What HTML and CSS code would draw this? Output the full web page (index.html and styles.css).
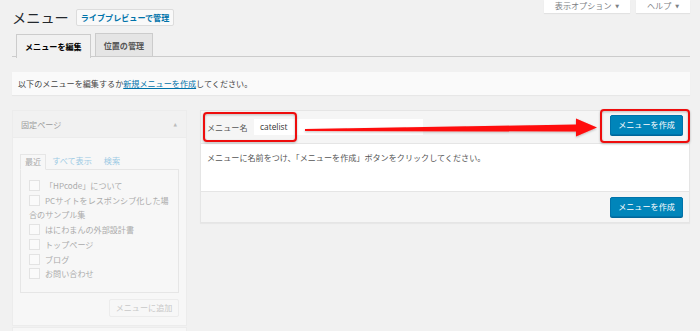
FILE: index.html
```html
<!DOCTYPE html>
<html lang="ja">
<head>
    <meta charset="UTF-8">
    <title>メニュー</title>
    <link rel="stylesheet" href="styles.css">
</head>
<body>

<div class="wrap">
    <div class="screen-meta">
        <span class="meta-btn">表示オプション <span class="caret">▼</span></span>
        <span class="meta-btn help">ヘルプ <span class="caret">▼</span></span>
    </div>

    <div class="title-row">
        <h1>メニュー</h1>
        <a class="title-action">ライブプレビューで管理</a>
    </div>

    <nav class="nav-tabs">
        <a class="tab active">メニューを編集</a>
        <a class="tab">位置の管理</a>
    </nav>

    <div class="notice">以下のメニューを編集するか<a>新規メニューを作成</a>してください。</div>

    <div class="columns">
        <aside class="sidebar">
            <div class="box">
                <div class="box-head">
                    <span>固定ページ</span>
                    <span class="toggle">▲</span>
                </div>
                <div class="box-body">
                    <div class="inner-tabs">
                        <span class="itab active">最近</span>
                        <span class="itab">すべて表示</span>
                        <span class="itab">検索</span>
                    </div>
                    <ul class="page-list">
                        <li><span class="check"></span>「HPcode」について</li>
                        <li><span class="check"></span>PCサイトをレスポンシブ化した場合のサンプル集</li>
                        <li><span class="check"></span>はにわまんの外部設計書</li>
                        <li><span class="check"></span>トップページ</li>
                        <li><span class="check"></span>ブログ</li>
                        <li><span class="check"></span>お問い合わせ</li>
                    </ul>
                    <div class="add-row">
                        <span class="add-btn">メニューに追加</span>
                    </div>
                </div>
            </div>
            <div class="box next"></div>
        </aside>

        <section class="menu-panel">
            <div class="panel-head">
                <label class="name-label">メニュー名</label>
                <span class="name-input">catelist</span>
                <span class="primary-btn">メニューを作成</span>
            </div>
            <div class="panel-body">
                <p>メニューに名前をつけ、「メニューを作成」ボタンをクリックしてください。</p>
            </div>
            <div class="panel-foot">
                <span class="primary-btn">メニューを作成</span>
            </div>
        </section>
    </div>
</div>

<!-- red annotations drawn over the screenshot -->
<svg class="annotations" width="700" height="331" viewBox="0 0 700 331">
    <defs>
        <filter id="soft" x="-10%" y="-50%" width="120%" height="200%">
            <feDropShadow dx="0" dy="1" stdDeviation="1" flood-color="#000" flood-opacity="0.25"/>
        </filter>
    </defs>
    <g filter="url(#soft)" fill="none" stroke="#ee1111" stroke-width="2">
        <rect x="204" y="113" width="92" height="28" rx="3"/>
        <rect x="601" y="110" width="88" height="32" rx="3"/>
    </g>
    <polygon filter="url(#soft)" fill="#ff0a0a"
             points="305,129 576,124.5 576,118.5 597,127.5 576,136.5 576,131.5 305,131"/>
</svg>

</body>
</html>
```

FILE: styles.css
```css
html {
    overflow: hidden;
}

body {
    margin: 0;
    background-color: #f1f1f1;
    font-family: "Noto Sans CJK JP", "Liberation Sans", sans-serif;
    font-size: 8.1px;
    color: #444;
    width: 700px;
    height: 331px;
    overflow: hidden;
    position: relative;
}

a {
    text-decoration: none;
}

.wrap {
    padding: 0 10px 0 12px;
}

/* top right buttons */
.screen-meta {
    float: right;
    display: flex;
    gap: 6px;
}

.meta-btn {
    background-color: #fff;
    color: #7c8084;
    height: 13px;
    line-height: 12px;
    width: 86px;
    text-align: center;
    box-shadow: 0 1px 1px rgba(0, 0, 0, 0.06);
}

.meta-btn.help {
    width: 54px;
}

.caret {
    font-family: "DejaVu Sans", sans-serif;
    font-size: 5px;
    vertical-align: 1px;
    margin-left: 2px;
}

/* title */
.title-row {
    display: flex;
    align-items: center;
    padding-top: 9px;
    height: 17px;
}

h1 {
    margin: 0;
    font-size: 14.2px;
    font-weight: 400;
    color: #23282d;
    line-height: 17px;
}

.title-action {
    margin-left: 7px;
    height: 15px;
    line-height: 15px;
    padding: 0 4px;
    border: 1px solid #dcdcdc;
    background-color: #f9f9f9;
    color: #0073aa;
    font-weight: 700;
    border-radius: 2px;
}

/* tabs */
.nav-tabs {
    margin-top: 7px;
    padding-left: 4px;
    border-bottom: 1px solid #ccc;
    display: flex;
    gap: 4px;
    height: 23px;
}

.tab {
    display: block;
    height: 23px;
    line-height: 23px;
    padding: 0 8px;
    border: 1px solid #ccc;
    border-bottom: none;
    background-color: #e5e5e5;
    color: #555;
    font-weight: 700;
    box-sizing: border-box;
}

.tab.active {
    background-color: #f1f1f1;
    color: #000;
    height: 24px;
    margin-top: 1px;
}

/* notice */
.notice {
    margin-top: 15px;
    height: 23px;
    line-height: 23px;
    padding-left: 6px;
    background-color: #fafafa;
    box-shadow: 0 1px 1px rgba(0, 0, 0, 0.04);
}

.notice a {
    color: #0073aa;
    text-decoration: underline;
}

/* columns */
.columns {
    margin-top: 15px;
    display: flex;
    gap: 13px;
    align-items: flex-start;
}

.sidebar {
    width: 175px;
    flex: none;
}

.box {
    border: 1px solid #ececec;
    background-color: #f7f7f7;
}

.box.next {
    margin-top: 1px;
    height: 3px;
    border-bottom: none;
}

.box-head {
    height: 26px;
    background-color: #f1f1f1;
    border-bottom: 1px solid #ececec;
    display: flex;
    align-items: center;
    justify-content: space-between;
    padding: 0 8px;
    color: #9a9a9a;
}

.toggle {
    font-family: "DejaVu Sans", sans-serif;
    font-size: 4.5px;
    color: #bbb;
    margin-right: 1px;
}

.box-body {
    padding: 16px 7px 8px;
}

.inner-tabs {
    display: flex;
    height: 15px;
    line-height: 14px;
}

.itab {
    color: #9ccae4;
    padding: 0 6px;
}

.itab.active {
    color: #a8a8a8;
    border: 1px solid #e6e6e6;
    border-bottom: 1px solid #f7f7f7;
    padding: 0 4px;
    margin-bottom: -1px;
    position: relative;
}

.page-list {
    list-style: none;
    margin: 0;
    border: 1px solid #e6e6e6;
    padding: 9px 8px 9px;
    height: 104px;
    color: #ababab;
    line-height: 14.7px;
}

.check {
    display: inline-block;
    width: 9px;
    height: 9px;
    border: 1px solid #e3e3e3;
    background-color: #fafafa;
    vertical-align: -2px;
    margin-right: 5px;
}

.add-row {
    display: flex;
    justify-content: flex-end;
    margin-top: 6px;
}

.add-btn {
    height: 16px;
    line-height: 16px;
    width: 68px;
    text-align: center;
    border: 1px solid #ececec;
    background-color: #f7f7f7;
    color: #c8c8c8;
    border-radius: 2px;
}

/* menu editor panel */
.menu-panel {
    flex: 1;
    border: 1px solid #e5e5e5;
    background-color: #f5f5f5;
    box-shadow: 0 1px 1px rgba(0, 0, 0, 0.04);
}

.panel-head {
    height: 32px;
    display: flex;
    align-items: center;
    padding: 0 6px;
    border-bottom: 1px solid #e5e5e5;
}

.name-label {
    color: #555;
    width: 47px;
}

.name-input {
    width: 163px;
    height: 16px;
    line-height: 16px;
    padding-left: 6px;
    background-color: #fff;
    color: #333;
    font-family: "Open Sans", sans-serif;
    font-size: 8.4px;
}

.primary-btn {
    margin-left: auto;
    width: 71px;
    height: 18px;
    line-height: 18px;
    text-align: center;
    color: #fff;
    background-color: #0085ba;
    border: 1px solid #0073aa;
    border-radius: 2px;
    box-shadow: 0 1px 0 #006799;
}

.panel-head .primary-btn {
    margin-top: -4px;
}

.panel-body {
    background-color: #fff;
    height: 47px;
    padding: 0 6px;
    border-bottom: 1px solid #e5e5e5;
}

.panel-body p {
    margin: 0;
    padding-top: 8px;
    line-height: 12px;
    color: #555;
}

.panel-foot {
    height: 30px;
    display: flex;
    align-items: center;
    padding: 0 6px;
}

.annotations {
    position: absolute;
    left: 0;
    top: 0;
    pointer-events: none;
}
```
